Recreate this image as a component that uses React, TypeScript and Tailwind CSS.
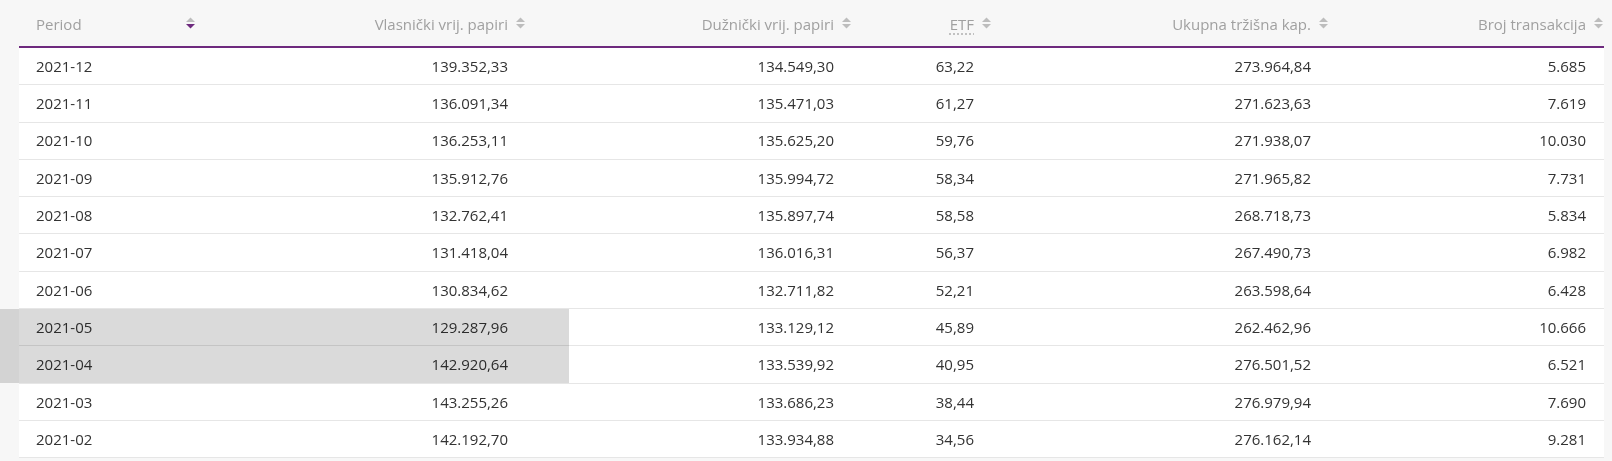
import React from "react";

type Row = [string, string, string, string, string, string];

const rows: Row[] = [
  ["2021-12", "139.352,33", "134.549,30", "63,22", "273.964,84", "5.685"],
  ["2021-11", "136.091,34", "135.471,03", "61,27", "271.623,63", "7.619"],
  ["2021-10", "136.253,11", "135.625,20", "59,76", "271.938,07", "10.030"],
  ["2021-09", "135.912,76", "135.994,72", "58,34", "271.965,82", "7.731"],
  ["2021-08", "132.762,41", "135.897,74", "58,58", "268.718,73", "5.834"],
  ["2021-07", "131.418,04", "136.016,31", "56,37", "267.490,73", "6.982"],
  ["2021-06", "130.834,62", "132.711,82", "52,21", "263.598,64", "6.428"],
  ["2021-05", "129.287,96", "133.129,12", "45,89", "262.462,96", "10.666"],
  ["2021-04", "142.920,64", "133.539,92", "40,95", "276.501,52", "6.521"],
  ["2021-03", "143.255,26", "133.686,23", "38,44", "276.979,94", "7.690"],
  ["2021-02", "142.192,70", "133.934,88", "34,56", "276.162,14", "9.281"],
];

const cols = "grid grid-cols-[177px_330px_326px_140px_337px_275px]";

function SortIcon({ active = false }: { active?: boolean }) {
  return (
    <svg width="9" height="12" viewBox="0 0 9 12" className="absolute right-[1px] top-1/2 -translate-y-1/2">
      <path d="M0 5 L4.5 0.5 L9 5 Z" fill="#bdbdbd" />
      <path d="M0 7 L9 7 L4.5 11.5 Z" fill={active ? "#6e2a7e" : "#bdbdbd"} />
    </svg>
  );
}

function HeadCell({ label, active, left, abbr }: { label: string; active?: boolean; left?: boolean; abbr?: boolean }) {
  return (
    <div className={`relative flex items-center pt-[3px] ${left ? "justify-start pl-[17px]" : "justify-end pr-[18px]"}`}>
      {abbr ? (
        <span className="underline decoration-dotted decoration-[#b0b0b0] underline-offset-[3px]">{label}</span>
      ) : (
        <span>{label}</span>
      )}
      <SortIcon active={active} />
    </div>
  );
}

export default function App() {
  return (
    <div className="relative h-[461px] overflow-hidden bg-[#f7f7f7] pl-[19px] pr-[8px] font-['Open_Sans',sans-serif]">
      <div className={`${cols} h-[48px] border-b-2 border-[#6e2a7e] text-[15px] text-[#a0a0a0]`}>
        <HeadCell label="Period" left active />
        <HeadCell label="Vlasnički vrij. papiri" />
        <HeadCell label="Dužnički vrij. papiri" />
        <HeadCell label="ETF" abbr />
        <HeadCell label="Ukupna tržišna kap." />
        <HeadCell label="Broj transakcija" />
      </div>
      {rows.map((r) => (
        <div key={r[0]} className={`${cols} h-[37.3px] border-b border-[#e6e6e6] bg-white text-[15px] text-[#333]`}>
          <div className="flex items-center pl-[17px]">{r[0]}</div>
          {r.slice(1).map((v, i) => (
            <div key={i} className="flex items-center justify-end pr-[18px]">
              {v}
            </div>
          ))}
        </div>
      ))}
      {/* selection highlight over two rows */}
      <div className="pointer-events-none absolute left-0 top-[309px] h-[74px] w-[569px] bg-[#dadada] mix-blend-multiply" />
    </div>
  );
}
